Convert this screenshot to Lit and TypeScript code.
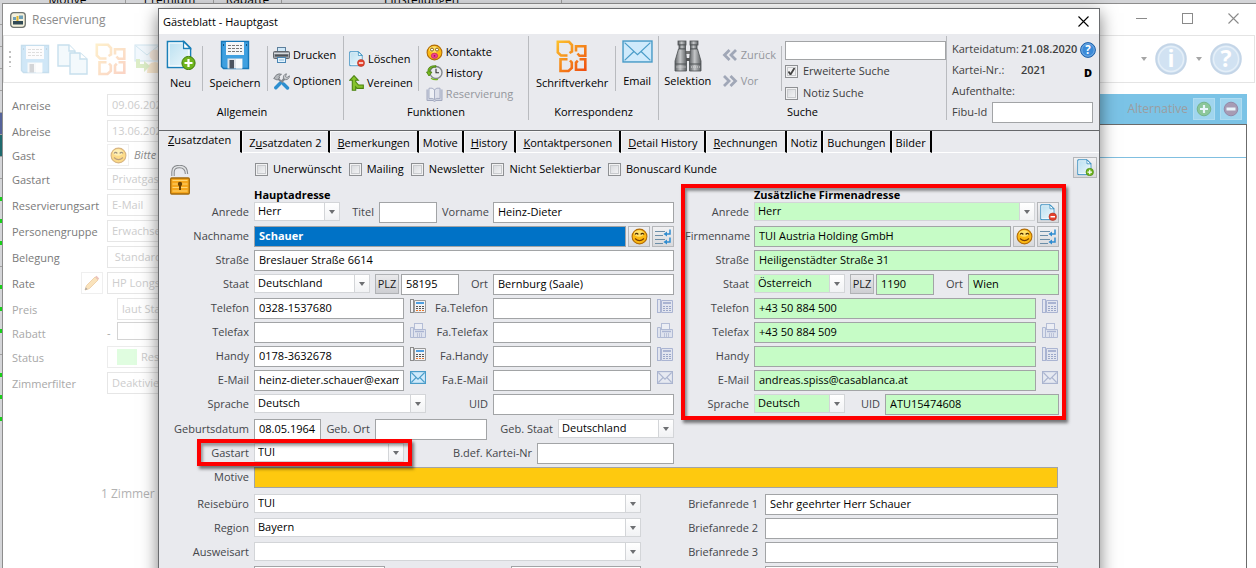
import { LitElement, html, css, nothing, TemplateResult } from "lit";
import { customElement } from "lit/decorators.js";
import { classMap } from "lit/directives/class-map.js";

/* ---------- icons ---------- */

const icoDoc = (w: number, badge: "plus" | "minus") => html`
  <svg width=${w} height=${w} viewBox="0 0 30 30" aria-hidden="true">
    <defs><linearGradient id="dg" x1="0" y1="0" x2="1" y2="1"><stop offset="0" stop-color="#b9dff0"/><stop offset="1" stop-color="#eef8fc"/></linearGradient></defs>
    <path d="M1.5 1.5H18L24.5 8V27.5H1.5Z" fill="url(#dg)" stroke="#1a7fb8" stroke-width="1.6"/>
    <path d="M3 3H17V9H23V26H3Z" fill="none" stroke="#fff" stroke-width="1.2"/>
    <path d="M17.5 1.5V8.5H24.5Z" fill="#fff" stroke="#1a7fb8" stroke-width="1.3"/>
    ${badge === "plus"
      ? html`<svg viewBox="0 0 30 30" width="30" height="30"><circle cx="22.5" cy="23" r="6.6" fill="#6fb51c" stroke="#3f7d0c"/><path d="M22.5 19V27M18.5 23H26.5" stroke="#fff" stroke-width="2.2"/></svg>`
      : html`<svg viewBox="0 0 30 30" width="30" height="30"><circle cx="22.5" cy="22.5" r="6.6" fill="#e5412c" stroke="#a82a18"/><path d="M18.5 22.5H26.5" stroke="#fff" stroke-width="2.6"/></svg>`}
  </svg>`;

const icoSave = () => html`
  <svg width="30" height="30" viewBox="0 0 30 30" aria-hidden="true">
    <path d="M1.5 1.5H28.5V28.5H3.5L1.5 26.5Z" fill="#3fa0e0" stroke="#1677b8" stroke-width="1.4"/>
    <rect x="6" y="2" width="18" height="13" fill="#f4f6f8"/>
    <path d="M8 5.5H22M8 8.5H22M8 11.5H22" stroke="#777" stroke-dasharray="3 1"/>
    <rect x="7.5" y="18.5" width="15" height="10" fill="#dfe3e8"/>
    <rect x="9.5" y="20" width="4.5" height="8.5" fill="#4c5560"/>
    <rect x="16" y="19" width="6" height="9.5" fill="#f7f9fa"/>
    <path d="M3.5 4V6M26.5 4V6" stroke="#14507c"/>
  </svg>`;

const icoPrinter = () => html`
  <svg width="17" height="16" viewBox="0 0 17 16" aria-hidden="true">
    <rect x="4.5" y=".5" width="8" height="5" fill="#cfe8f8" stroke="#5d7f9c"/>
    <rect x=".5" y="4.5" width="16" height="7" rx="1" fill="#9ba1a8" stroke="#62676d"/>
    <path d="M1 6.5H16" stroke="#d5d8dc"/><path d="M2 8.5H15" stroke="#4c5157" stroke-width="2"/>
    <rect x="4.5" y="10.5" width="8" height="5" fill="#e4f3fc" stroke="#4a86b4"/><path d="M6 13H11" stroke="#8ab9dc"/>
  </svg>`;

const icoTools = () => html`
  <svg width="17" height="17" viewBox="0 0 17 17" aria-hidden="true">
    <path d="M5 5.5L10 10.500" stroke="#85898f" stroke-width="2"/>
    <path d="M10.500 11L14.500 15" stroke="#2d8fd0" stroke-width="3.400" stroke-linecap="round"/>
    <path d="M7.500 10L12.500 4.500" stroke="#85898f" stroke-width="2.600"/>
    <path d="M2.800 14.800L7.200 10.300" stroke="#2d8fd0" stroke-width="3.400" stroke-linecap="round"/>
    <path d="M10.500 5.500A3.600 3.600 0 0 1 13.500.8L12.500 3.500L14 4.500L16.400 2.800A3.600 3.600 0 0 1 12.500 6.700Z" fill="#c6c9cd" stroke="#74787d" stroke-width=".8"/>
    <path d="M.7 5.500L3.500 1.800Q6 .2 8.500 1.300L6 3.200L6.600 5L4.200 7Z" fill="#b4b8bc" stroke="#6d7176" stroke-width=".8"/>
  </svg>`;

const icoMerge = () => html`
  <svg width="15" height="16" viewBox="0 0 15 16" aria-hidden="true">
    <path d="M5 .7L9.3 5.3H6.7V6.8L9.5 10H14.3V13.4H8L6.7 12V15.3H3.3V5.3H.7Z" fill="#86c32b" stroke="#4c8410" stroke-width="1.1"/>
  </svg>`;

const icoSmiley = (kiss = false) => html`
  <svg width="17" height="17" viewBox="0 0 17 17" aria-hidden="true">
    <circle cx="8.5" cy="8.5" r="7.4" fill="#fcb913" stroke="#b26d08" stroke-width="1.1"/>
    <ellipse cx="8" cy="5.5" rx="5" ry="3.3" fill="#ffe06a"/>
    ${kiss
      ? html`<svg width="17" height="17"><circle cx="6" cy="5.600" r="1.500" fill="#fff" stroke="#7a5200" stroke-width=".9"/><circle cx="11" cy="5.600" r="1.500" fill="#fff" stroke="#7a5200" stroke-width=".9"/><ellipse cx="8.5" cy="11.8" rx="3.2" ry="2.6" fill="#f2438f" stroke="#c5246a" stroke-width=".8"/><circle cx="8.5" cy="11.8" r=".9" fill="#a01050"/></svg>`
      : html`<svg width="17" height="17"><path d="M4 6.5Q5.6 4.4 7.3 6.5M9.7 6.5Q11.4 4.4 13 6.5" fill="none" stroke="#4a2b00" stroke-width="1.2"/><path d="M4 10.5Q8.5 14.8 13 10.5" fill="none" stroke="#7a3f00" stroke-width="1.1"/></svg>`}
  </svg>`;

const icoClock = () => html`
  <svg width="17" height="16" viewBox="0 0 17 16" aria-hidden="true">
    <circle cx="10" cy="7.5" r="6" fill="#e9ebee" stroke="#83878c" stroke-width="1.4"/>
    <path d="M10 3.8V7.8H13" fill="none" stroke="#333" stroke-width="1.1"/>
    <path d="M10 2.2Q3.6 1.5 3.7 7H6L3 11L.5 7H1.8Q1.6.2 10 .7Z" fill="#76b91f" stroke="#467e0d" stroke-width=".8"/>
    <path d="M5 13.2Q8 15.4 12 14.4" fill="none" stroke="#76b91f" stroke-width="1.2"/>
  </svg>`;

const icoBook = () => html`
  <svg width="17" height="15" viewBox="0 0 17 15" aria-hidden="true">
    <path d="M1 2.5V13.5H7L8.5 14.5L10 13.5H16V2.5" fill="#ccd1df" stroke="#a2a9bf"/>
    <path d="M3 1.2Q6.5.4 8.5 2.8V12.5Q6.5 10.8 3 11.5Z" fill="#eef0f5" stroke="#a8afc4"/>
    <path d="M14 1.2Q10.5.4 8.5 2.8V12.5Q10.5 10.8 14 11.5Z" fill="#dde0ea" stroke="#a8afc4"/>
  </svg>`;

const icoOffice = () => html`
  <svg width="32" height="33" viewBox="0 0 32 33" aria-hidden="true">
    <defs><linearGradient id="og" gradientUnits="userSpaceOnUse" x1="0" y1="0" x2="30" y2="32"><stop offset="0" stop-color="#fdc52e"/><stop offset=".5" stop-color="#f58a1c"/><stop offset="1" stop-color="#ef4a10"/></linearGradient></defs>
    <g fill="none" stroke="url(#og)" stroke-width="2.600">
      <path d="M11.500 15.500H5L1.800 12.500V1.800H13L16 5V11.500L13.500 13"/>
      <path d="M20 11.500V6.300H29.300V15.800H23.500L21.500 13.500"/>
      <path d="M11.500 19.300H4.500V31H12.500L15.800 28V22.500L14 20.500"/>
      <path d="M23.500 19.300H29.300V29.700H20V22.500L21.800 20.800"/>
    </g>
  </svg>`;

const icoMail = (w: number, h: number, dim = false) => {
  const c = dim ? "#aab4cf" : "#4a9cc8";
  return html`
  <svg width=${w} height=${h} viewBox="0 0 30 22" preserveAspectRatio="none" aria-hidden="true">
    <rect x="1" y="1" width="28" height="20" fill=${dim ? "#e6e9f1" : "#cfeafb"} stroke=${c} stroke-width=${w > 20 ? 1.4 : 2}/>
    <path d="M2.500 2.500L15 14L27.500 2.500M2.500 19.500L11.500 11M27.500 19.500L18.500 11" fill="none" stroke=${c} stroke-width=${w > 20 ? 1.2 : 1.9}/>
  </svg>`;
};

const icoBinoculars = () => html`
  <svg width="28" height="32" viewBox="0 0 28 32" aria-hidden="true">
    <defs><linearGradient id="bg"><stop offset="0" stop-color="#5e6164"/><stop offset=".45" stop-color="#c4c6c8"/><stop offset="1" stop-color="#5e6164"/></linearGradient></defs>
    <rect x="11" y="11" width="6" height="3" fill="#777"/><rect x="11" y="18" width="6" height="3" fill="#555"/>
    <g fill="url(#bg)" stroke="#4d5053" stroke-width=".8">
      <rect x="4" y="1" width="8" height="4"/><rect x="5" y="5" width="6.500" height="4"/>
      <path d="M4.500 9H11.500L12.500 20V31H1V21Z"/>
      <rect x="16" y="1" width="8" height="4"/><rect x="16.500" y="5" width="6.500" height="4"/>
      <path d="M16.500 9H23.500L27 21V31H15.500V20Z"/>
    </g>
    <path d="M1 24H12.500M15.500 24H27" stroke="#4d5053"/><path d="M2.500 27H11.500M17 27H26" stroke="#ddd" stroke-dasharray="1 1"/>
  </svg>`;

const icoChevrons = (left: boolean) => html`
  <svg width="16" height="12" viewBox="0 0 16 12" aria-hidden="true">
    <path d=${left ? "M7.500 1L2.500 6L7.500 11M14 1L9 6L14 11" : "M2 1L7 6L2 11M8.500 1L13.500 6L8.500 11"} fill="none" stroke="#a0a7b7" stroke-width="2.800"/>
  </svg>`;

const icoRound = (w: number, sign: string, fill: string, rim: string) => html`
  <svg width=${w} height=${w} viewBox="0 0 32 32" aria-hidden="true">
    <circle cx="16" cy="16" r="14.800" fill=${fill} stroke=${rim} stroke-width="2"/>
    <circle cx="16" cy="16" r="12.500" fill="none" stroke="#fff" stroke-opacity=".45" stroke-width="1.400"/>
    <text x="16" y="24" text-anchor="middle" font-family="Open Sans, sans-serif" font-weight="700" font-size="23" fill="#fff">${sign}</text>
  </svg>`;

const icoSign = (plus: boolean) => html`
  <svg width="16" height="16" viewBox="0 0 16 16" aria-hidden="true">
    <circle cx="8" cy="8" r="6.800" fill=${plus ? "#8cc79a" : "#a79bb4"} stroke=${plus ? "#75b58c" : "#9389a8"}/>
    <path d=${plus ? "M8 4V12M4 8H12" : "M3.500 8H12.500"} stroke="#e9f5fb" stroke-width=${plus ? 2.2 : 3}/>
  </svg>`;

const icoLock = () => html`
  <svg width="20" height="30" viewBox="0 0 20 30" aria-hidden="true">
    <path d="M3 11V7Q3 1.500 9.500 1.500Q16.500 1.500 16.500 9" fill="none" stroke="#85888b" stroke-width="3.400"/>
    <path d="M3 11V7Q3 1.500 9.500 1.500Q16.500 1.500 16.500 9" fill="none" stroke="#e2e4e6" stroke-width="1.400"/>
    <rect x=".7" y="13" width="18.600" height="16" rx="1" fill="#f5a61c" stroke="#a3690b" stroke-width="1.300"/>
    <path d="M2.500 15.500H17.500M2.500 19H17.500M2.500 22.500H17.500M2.500 26H17.500" stroke="#ffd571" stroke-width="1"/>
    <circle cx="10" cy="19" r="2.200" fill="#6b4204"/><path d="M10 19V25" stroke="#6b4204" stroke-width="2"/>
  </svg>`;

const icoLines = () => html`
  <svg width="18" height="16" viewBox="0 0 18 16" aria-hidden="true">
    <path d="M1 2.500H11M1 6.500H9M1 10.500H11M1 14.500H9" stroke="#6c8ea8" stroke-width="1.200"/>
    <path d="M16 .5V5H12M16 8.500V13H12" fill="none" stroke="#2f8cd0" stroke-width="1.500"/>
    <path d="M9.500 5L13 2.500V7.500ZM9.500 13L13 10.500V15.500Z" fill="#2f8cd0"/>
  </svg>`;

const icoPhone = (dim = false) => html`
  <svg width="16" height="15" viewBox="0 0 16 15" aria-hidden="true">
    <path d="M4.500 1.500H15.500V13.500H4.500Z" fill=${dim ? "#e2e5ef" : "#f1f2f4"} stroke=${dim ? "#aab4d2" : "#999"}/>
    <rect x=".5" y=".5" width="3" height="13" fill=${dim ? "#e2e5ef" : "#f1f2f4"} stroke=${dim ? "#aab4d2" : "#8c8c8c"}/>
    <path d="M6 4H14" stroke=${dim ? "#aab4d2" : "#4d9ee0"} stroke-width="2"/>
    <path d="M6 7.500H14M6 9.500H14" stroke=${dim ? "#9ba7c8" : "#555"} stroke-dasharray="2 1"/>
    <path d="M6 11.500H14" stroke=${dim ? "#9ba7c8" : "#e8762c"} stroke-dasharray="2 1"/>
  </svg>`;

const icoFax = () => html`
  <svg width="16" height="16" viewBox="0 0 16 16" aria-hidden="true">
    <rect x="4.500" y=".5" width="8" height="6" fill="#eceef4" stroke="#b4bdd6"/>
    <path d="M.5 4.500H3.500V14.500H.5ZM3.500 6.500H15.500V14.500H3.500Z" fill="#dfe3ee" stroke="#b0bad4"/>
    <path d="M5 8.500H14" stroke="#aab4d2" stroke-width="1.500"/>
    <path d="M7 11H13M7 13H13" stroke="#97a2c4" stroke-dasharray="1 1"/>
  </svg>`;

const icoClose = (w: number, c: string) => html`
  <svg width=${w} height=${w} viewBox="0 0 11 11" aria-hidden="true"><path d="M.5.5L10.500 10.500M10.500.5L.5 10.500" stroke=${c} stroke-width="1.100"/></svg>`;

/* ---------- shared rules ---------- */

const base = css`
  * { box-sizing: border-box; }
  :host { font: 11px/14px "Open Sans", "Noto Sans", sans-serif; color: #000; }
  button { font: inherit; color: inherit; padding: 0; margin: 0; border: 0; background: none; white-space: nowrap; }
  input, select { font: inherit; color: inherit; margin: 0; min-width: 0; border-radius: 0; outline: 0; }
  svg { display: block; flex: none; }
  label { white-space: nowrap; }
`;

/* ---------- window in the background ---------- */

interface ResRow { label: string; value: string; kind?: "face" | "pencil" | "inset" | "minus" | "status"; tall?: boolean; dim?: boolean; }

const RES_ROWS: ResRow[] = [
  { label: "Anreise", value: "09.06.2020", tall: true },
  { label: "Abreise", value: "13.06.2020" },
  { label: "Gast", value: "Bitte wählen", kind: "face" },
  { label: "Gastart", value: "Privatgast", tall: true },
  { label: "Reservierungsart", value: "E-Mail", tall: true },
  { label: "Personengruppe", value: "Erwachsene", tall: true },
  { label: "Belegung", value: " Standard", tall: true },
  { label: "Rate", value: "HP Longstay", kind: "pencil", tall: true },
  { label: "Preis", value: "laut Stamm", kind: "inset", dim: true },
  { label: "Rabatt", value: "", kind: "minus", dim: true },
  { label: "Status", value: "Reservierung", kind: "status", tall: true, dim: true },
  { label: "Zimmerfilter", value: "Deaktiviert", dim: true },
];

@customElement("reservation-window")
export class ReservationWindow extends LitElement {
  static styles = [base, css`
    :host { display: flex; flex-direction: column; flex: 1; background: #fff; border-left: 1px solid #8d8d8d; border-top: 1px solid #8d8d8d; }
    .title { display: flex; align-items: center; height: 31px; padding: 0 17px 0 7px; gap: 6px; color: #8c8c8c; font-size: 12px; }
    .caps { display: flex; align-items: center; gap: 35px; margin-left: auto; margin-top: -3px; }
    .bar { display: flex; align-items: center; height: 48px; margin-right: 1px; padding: 0 12px 0 5px; border: 1px solid #e4e4e4; }
    .grip { width: 2px; height: 16px; margin-right: 9px; background: repeating-linear-gradient(#c0c0c0 0 2px, transparent 2px 5px); }
    .faded { display: flex; align-items: center; gap: 7px; opacity: .24; }
    .round { display: flex; align-items: center; gap: 8px; margin-left: auto; }
    .half { opacity: .28; }
    .caret { width: 0; border: 3px solid transparent; border-top: 4px solid #a6a6a6; border-bottom: 0; margin-left: 1px; }
    .main { display: flex; flex: 1; padding-top: 11px; }
    .form { width: 240px; padding-left: 9px; }
    .line { display: flex; height: 24px; color: #7a7a7a; }
    .line.tall { height: 26px; }
    .line.dim { color: #a8a8a8; }
    .line > * { flex: none; }
    .line label { width: 69px; line-height: 23px; }
    .lead { display: flex; justify-content: flex-end; width: 26px; padding-right: 4px; }
    .sq { display: flex; align-items: center; justify-content: center; flex: none; width: 22px; height: 22px; border: 1px solid #e0e0e0; opacity: .5; }
    .box { width: 120px; height: 22px; padding: 0 4px 2px; border: 1px solid #e6e6e6; background: #fff; color: #cdcdcd; }
    .inset { margin-left: 10px; }
    .minus { width: 10px; line-height: 22px; }
    .low { height: 18px; border-color: #d4d4d4; }
    .bare { border: 0; margin-left: 4px; font-style: italic; color: #8d8d8d; padding-left: 1px; width: 90px; }
    .state { display: flex; width: 130px; height: 22px; border: 1px solid #ececec; padding: 2px 0 0 9px; }
    .green { flex: none; width: 20px; height: 16px; background: #e0fde0; }
    .state .box { border: 0; height: 16px; width: 90px; }
    .count { margin: 91px 0 0 89px; color: #b2b2b2; font-size: 12px; white-space: nowrap; }
    .pane { flex: 1; margin-right: 9px; display: flex; flex-direction: column; }
    .alt { display: flex; align-items: center; justify-content: flex-end; gap: 5px; height: 30px; padding-right: 5px; background: #7bc3e6; color: #9b9da0; font-size: 12px; }
    .alt button { display: flex; align-items: center; justify-content: center; width: 22px; height: 22px; background: #a0d5ee; border: 1px solid #b0dcf1; }
    .list { flex: 1; border: 1px solid #6b6b6b; border-bottom: 0; }
    .list div { height: 33px; border-bottom: 1px solid #80bfe0; }
  `];

  private row(r: ResRow, i: number) {
    const id = `res${i}`;
    const box = (cls: string) => html`<input id=${id} class="box ${cls}" .value=${r.value}>`;
    let body: TemplateResult = box("");
    if (r.kind === "face") body = html`<span class="sq">${icoSmiley()}</span>${box("bare")}`;
    if (r.kind === "inset") body = box("inset");
    if (r.kind === "minus") body = html`<span class="minus">-</span>${box("low")}`;
    if (r.kind === "status") body = html`<span class="state"><span class="green"></span>${box("")}</span>`;
    return html`
      <div class=${classMap({ line: true, tall: !!r.tall, dim: !!r.dim })}>
        <label for=${id}>${r.label}</label>
        <span class="lead">${r.kind === "pencil" ? html`<span class="sq"><svg width="16" height="16" viewBox="0 0 16 16"><path d="M1 15L2.500 10.500L11 2L14 5L5.500 13.500Z" fill="#f6c87c" stroke="#e0a860"/><path d="M11 2L12.500.8L15.200 3.500L14 5Z" fill="#d98a7a"/><path d="M1 15L1.800 12.500L3.500 14.200Z" fill="#444"/></svg></span>` : nothing}</span>
        ${body}
      </div>`;
  }

  render() {
    return html`
      <header class="title">
        <svg width="16" height="16" viewBox="0 0 16 16"><rect x=".7" y=".7" width="14.600" height="14.600" rx="3" fill="#f4f1dc" stroke="#6f7470" stroke-width="1.300"/><path d="M3 8V5H6V8M9 3.500H13V7H9Z" fill="#6fa0b8"/><path d="M3 9H13V12.500H3Z" fill="#314a55"/><path d="M6.500 4H8.500V9H6.500Z" fill="#e2b52c"/></svg>
        <span>Reservierung</span>
        <span class="caps">
          <svg width="11" height="11"><path d="M0 5.500H11" stroke="#8a8a8a"/></svg>
          <svg width="11" height="11"><rect x=".5" y=".5" width="10" height="10" fill="none" stroke="#8a8a8a"/></svg>
          ${icoClose(11, "#8a8a8a")}
        </span>
      </header>
      <div class="bar">
        <span class="grip"></span>
        <span class="faded">
          ${icoSave()}
          <svg width="31" height="31" viewBox="0 0 31 31"><g fill="#cfe9f5" stroke="#1a7fb8" stroke-width="1.400"><path d="M1 1H12L18 7V22H1Z"/><path d="M12 1V7H18" fill="#fff"/><path d="M13 9H23L30 15V30H13Z"/><path d="M23 9V15H30" fill="#fff"/></g></svg>
          ${icoOffice()}
          <svg width="30" height="30" viewBox="0 0 30 30"><rect x="1" y="1" width="24" height="16" fill="#cfeafb" stroke="#4a9cc8"/><path d="M2 2L13 11L24 2" fill="none" stroke="#4a9cc8"/><circle cx="21" cy="11" r="5.500" fill="#d3a06e"/><path d="M13 29Q13 18 21 18T30 29Z" fill="#e8a33c"/><path d="M2 15V24H10V28L16 22L10 17V20H6V15Z" fill="#76b91f"/></svg>
        </span>
        <span class="round">
          <span class="caret"></span>
          <span class="half">${icoRound(32, "i", "#5c9bd4", "#2e6dad")}</span>
          <span class="caret"></span>
          <span class="half">${icoRound(32, "?", "#5c9bd4", "#2e6dad")}</span>
        </span>
      </div>
      <div class="main">
        <div class="form">
          ${RES_ROWS.map((r, i) => this.row(r, i))}
          <div class="count">1 Zimmer benötigt</div>
        </div>
        <div class="pane">
          <div class="alt"><span>Alternative</span>
            <button aria-label="Alternative hinzufügen">${icoSign(true)}</button>
            <button aria-label="Alternative entfernen">${icoSign(false)}</button>
          </div>
          <div class="list"><div></div></div>
        </div>
      </div>`;
  }
}

/* ---------- guest sheet dialog ---------- */

const TABS: { key: string; rest: string; pre?: string; tight?: boolean }[] = [
  { key: "Z", rest: "usatzdaten" },
  { pre: "Z", key: "u", rest: "satzdaten 2" },
  { key: "B", rest: "emerkungen" },
  { key: "", rest: "Motive", tight: true },
  { key: "H", rest: "istory" },
  { key: "K", rest: "ontaktpersonen" },
  { key: "D", rest: "etail History" },
  { key: "R", rest: "echnungen" },
  { key: "", rest: "Notiz", tight: true },
  { key: "", rest: "Buchungen", tight: true },
  { key: "", rest: "Bilder", tight: true },
];

const FLAGS = ["Unerwünscht", "Mailing", "Newsletter", "Nicht Selektierbar", "Bonuscard Kunde"];

@customElement("guest-dialog")
export class GuestDialog extends LitElement {
  static styles = [base, css`
    :host { display: block; background: #e9eaee; border: 1px solid #6a6c6f; box-shadow: 0 5px 16px rgba(0, 0, 0, .5); }
    .title { display: flex; align-items: center; justify-content: space-between; height: 25px; padding: 0 10px 0 4px; background: #fff; }

    .ribbon { display: flex; height: 97px; padding-top: 2px; border-bottom: 1px solid #66686b; }
    .group { display: flex; flex-direction: column; flex: none; height: 84px; border-right: 1px solid #b9bbbf; }
    .tools { display: flex; height: 69px; }
    .caption { text-align: center; }
    .g1, .g2 { width: 185px; }
    .g1 .caption { padding-right: 18px; }
    .g3 { width: 130px; }
    .g4 { width: 288px; }
    .big { display: flex; flex-direction: column; align-items: center; justify-content: space-between; height: 50px; margin-top: 4px; }
    .big.mail, .big.sel { height: 48px; }
    .big.neu { width: 43px; } .big.save { width: 64px; } .big.letter { width: 87px; } .big.mail { width: 42px; } .big.sel { width: 59px; }
    .sep { width: 1px; height: 45px; margin-top: 10px; background: #b9bbbf; }
    .stack { display: flex; flex-direction: column; padding: 11px 0 0 5px; gap: 10px; }
    .stack.low { padding-top: 15px; gap: 8px; }
    .stack.three { padding: 8px 0 0 7px; gap: 5px; }
    .stack button { display: flex; align-items: center; gap: 3px; height: 16px; }
    .stack .off { color: #94979d; }
    .push { margin-left: 5px; }
    .search { display: flex; flex-direction: column; gap: 8px; padding: 5px 0 0 3px; }
    .search .box { width: 161px; height: 19px; margin-bottom: -4px; }
    .search .check { color: #3c3c3c; }
    .info { display: grid; grid-template-columns: 69px 56px 1fr; grid-template-rows: 21px 21px 21px 21px; flex: 1; padding: 3px 0 0 5px; line-height: 20px; color: #3f3f3f; }
    .info b { font-weight: 600; }
    .info .help { margin-top: 3px; justify-self: end; padding-right: 3px; }
    .info .d { justify-self: end; padding-right: 7px; color: #000; font-weight: 800; line-height: 26px; }
    .info .wide { grid-column: span 3; }
    .fibu { grid-column: span 3; display: flex; gap: 5px; padding-right: 6px; }
    .fibu .box { flex: 1; }

    .check { display: flex; align-items: center; gap: 5px; height: 14px; }
    .check input { appearance: none; flex: none; width: 13px; height: 13px; border: 1px solid #8e9093; background: linear-gradient(135deg, #d4d6da, #f8f8f9); box-shadow: inset 0 0 0 1px #f2f2f3, inset 0 0 0 2px #c8cacd; }
    .check input:checked { background: #f2f2f3 url("data:image/svg+xml,%3Csvg xmlns='http://www.w3.org/2000/svg' viewBox='0 0 11 11'%3E%3Cpath d='M2.500 5.500L4.500 8.500L8.500 2' fill='none' stroke='%23444' stroke-width='1.800'/%3E%3C/svg%3E") center / 11px no-repeat; }

    .tabs { display: flex; height: 22px; }
    .tab { height: 22px; padding: 2px 7px 0; border-right: 2px solid #000; border-bottom: 1px solid #fff; box-shadow: inset 1px 1px #f8f8f9; }
    .tab.tight { padding: 2px 4px 0; }
    .tab.on { padding: 0 9px 3px; border-bottom-color: transparent; box-shadow: none; }
    .rest { flex: 1; border-bottom: 1px solid #fff; }

    .top { display: flex; align-items: flex-start; height: 31px; padding: 4px 2px 0 11px; }
    .lock { margin: 8px 65px -12px 0; }
    .flags { display: flex; gap: 7px; padding-top: 5px; }
    .sq { display: flex; align-items: center; justify-content: center; flex: none; width: 22px; height: 21px; border: 1px solid #b5b7ba; background: linear-gradient(#f1f1f3, #d8d9dc); }
    .sq.wide { width: 24px; margin-left: auto; }

    .sheets { display: flex; align-items: flex-start; padding-right: 33px; gap: 7px; }
    .left { display: flex; flex-direction: column; flex: 1; min-width: 0; gap: 3px; padding-top: 4px; }
    .firm { display: flex; flex-direction: column; flex: none; gap: 3px; width: 385px; padding: 0 3px 1px 0; border: 4px solid #fe0000; box-shadow: 2px 3px 3px rgba(0, 0, 0, .5), inset 2px 3px 3px rgba(0, 0, 0, .4); }
    h2 { margin: 0 0 -3px; font-size: 11px; line-height: 14px; font-weight: 700; padding-left: 95px; }
    .firm h2 { padding-left: 69px; }
    .row { display: flex; gap: 5px; height: 21px; }
    .row.rel { position: relative; }
    .row label { flex: none; text-align: right; line-height: 20px; color: #44464a; }
    .left .row > label:first-child, .more label.a, .motive label { width: 90px; }
    .firm .row > label:first-child { width: 64px; }
    .late { margin-top: 1px; }
    .join { display: flex; flex: 1; gap: 2px; min-width: 0; }
    .join.fix { flex: none; }
    .icon { flex: none; width: 18px; padding: 1px 0 0 1px; }
    .plz { width: 24px; height: 20px; border: 1px solid #b0b2b5; background: linear-gradient(#eaeaec, #cdced2); color: #222; }
    .box { height: 21px; padding: 0 4px 2px; border: 1px solid #a2a4a6; background: #fff; }
    .combo { display: grid; height: 19px; min-width: 0; }
    .combo select { grid-area: 1 / 1; width: 100%; height: 19px; appearance: none; padding: 0 17px 1px 3px; border: 1px solid #d3d5d8; background: #fff; }
    .combo .arrow { grid-area: 1 / 1; justify-self: end; display: flex; align-items: center; justify-content: center; width: 15px; height: 17px; margin: 1px; border-left: 1px solid #d3d5d8; background: linear-gradient(#fff, #f1f2f4); pointer-events: none; }
    .combo .arrow::after { content: ""; border: 3px solid transparent; border-top: 4px solid #6d6f72; border-bottom: 0; }
    .firm .box, .firm select { background: #c6fcc6; }
    .name { background: #0072c6; color: #fff; font-weight: 700; }
    .grow { flex: 1; }
    .w58 { width: 58px; } .w67 { width: 67px; } .w112 { width: 112px; } .w150 { width: 150px; }
    .c86 { width: 86px; } .c91 { width: 91px; } .c116 { width: 116px; } .c150 { width: 150px; } .c172 { width: 172px; }
    .l24 { width: 24px; } .l29 { width: 29px; } .l46 { width: 46px; } .l30 { width: 30px; } .l56 { width: 56px; } .l57 { width: 57px; } .l44 { width: 44px; } .l61 { width: 61px; } .l123 { width: 123px; }
    .mark { position: absolute; left: 38px; top: -4px; width: 215px; height: 27px; border: 4px solid #fe0000; box-shadow: 2px 3px 3px rgba(0, 0, 0, .5), inset 2px 3px 3px rgba(0, 0, 0, .35); pointer-events: none; }
    .motive { margin: 3px 41px 6px 0; }
    .motive .box { background: #fec90f; }
    .more { display: flex; padding-right: 41px; }
    .more .colA { display: flex; flex-direction: column; flex: 1; min-width: 0; gap: 3px; }
    .more .colB { display: flex; flex-direction: column; flex: none; width: 417px; gap: 3px; }
    .colB label { width: 117px; margin-right: 2px; }
    .gapless { padding-left: 95px; gap: 126px; }
  `];

  private combo(id: string, value: string, cls: string) {
    return html`<span class="combo ${cls}"><select id=${id}><option>${value}</option></select><span class="arrow"></span></span>`;
  }
  private box(id: string, value: string, cls: string) {
    return html`<input id=${id} class="box ${cls}" .value=${value}>`;
  }
  private contact(n: number, label: string, value: string, icon: TemplateResult, dimIcon: TemplateResult) {
    return html`<div class="row">
      <label for="k${n}">${label}</label>${this.box(`k${n}`, value, "w150")}<span class="icon">${icon}</span>
      <label class="l56" for="fk${n}">Fa.${label}</label>${this.box(`fk${n}`, "", "grow")}<span class="icon">${dimIcon}</span>
    </div>`;
  }
  private firmContact(n: number, label: string, value: string, icon: TemplateResult) {
    return html`<div class="row"><label for="c${n}">${label}</label>${this.box(`c${n}`, value, "grow")}<span class="icon">${icon}</span></div>`;
  }

  private ribbon() {
    return html`
      <div class="ribbon">
        <div class="group g1">
          <div class="tools">
            <button class="big neu">${icoDoc(30, "plus")}<span>Neu</span></button><span class="sep"></span>
            <button class="big save">${icoSave()}<span>Speichern</span></button><span class="sep"></span>
            <div class="stack"><button>${icoPrinter()}Drucken</button><button>${icoTools()}Optionen</button></div>
          </div>
          <div class="caption">Allgemein</div>
        </div>
        <div class="group g2">
          <div class="tools">
            <div class="stack low"><button>${icoDoc(16, "minus")}Löschen</button><button>${icoMerge()}Vereinen</button></div>
            <span class="sep push"></span>
            <div class="stack three"><button>${icoSmiley(true)}Kontakte</button><button>${icoClock()}History</button><button class="off" disabled>${icoBook()}Reservierung</button></div>
          </div>
          <div class="caption">Funktionen</div>
        </div>
        <div class="group g3">
          <div class="tools">
            <button class="big letter">${icoOffice()}<span>Schriftverkehr</span></button><span class="sep"></span>
            <button class="big mail">${icoMail(31, 23)}<span>Email</span></button>
          </div>
          <div class="caption">Korrespondenz</div>
        </div>
        <div class="group g4">
          <div class="tools">
            <button class="big sel">${icoBinoculars()}<span>Selektion</span></button>
            <div class="stack"><button class="off" disabled>${icoChevrons(true)}Zurück</button><button class="off" disabled>${icoChevrons(false)}Vor</button></div>
            <span class="sep push"></span>
            <div class="search">
              <input class="box" aria-label="Suche">
              <label class="check"><input type="checkbox" checked>Erweiterte Suche</label>
              <label class="check"><input type="checkbox">Notiz Suche</label>
            </div>
          </div>
          <div class="caption">Suche</div>
        </div>
        <div class="info">
          <span>Karteidatum:</span><b>21.08.2020</b><span class="help">${icoRound(16, "?", "#3b8ad8", "#1d5fa8")}</span>
          <span>Kartei-Nr.:</span><b>2021</b><span class="d">D</span>
          <span class="wide">Aufenthalte:</span>
          <div class="fibu"><label for="fibu">Fibu-Id</label><input id="fibu" class="box"></div>
        </div>
      </div>`;
  }

  render() {
    return html`
      <header class="title"><span>Gästeblatt - Hauptgast</span><button aria-label="Schließen">${icoClose(11, "#000")}</button></header>
      ${this.ribbon()}
      <nav class="tabs">
        ${TABS.map((t, i) => html`<button class=${classMap({ tab: true, on: i === 0, tight: !!t.tight })}>${t.pre ?? ""}${t.key ? html`<u>${t.key}</u>` : nothing}${t.rest}</button>`)}
        <span class="rest"></span>
      </nav>

      <div class="top">
        <span class="lock">${icoLock()}</span>
        <div class="flags">${FLAGS.map((f) => html`<label class="check"><input type="checkbox">${f}</label>`)}</div>
        <button class="sq wide" aria-label="Adresse hinzufügen">${icoDoc(17, "plus")}</button>
      </div>

      <div class="sheets">
        <section class="left">
          <h2>Hauptadresse</h2>
          <div class="row">
            <label for="anrede">Anrede</label>${this.combo("anrede", "Herr", "c86")}
            <label class="l29" for="titel">Titel</label>${this.box("titel", "", "w58")}
            <label class="l46" for="vorname">Vorname</label>${this.box("vorname", "Heinz-Dieter", "grow")}
          </div>
          <div class="row"><label for="nachname">Nachname</label>
            <span class="join">${this.box("nachname", "Schauer", "grow name")}
              <button class="sq" aria-label="Gast wählen">${icoSmiley()}</button><button class="sq" aria-label="Zeilen umbrechen">${icoLines()}</button></span>
          </div>
          <div class="row"><label for="strasse">Straße</label>${this.box("strasse", "Breslauer Straße 6614", "grow")}</div>
          <div class="row">
            <label for="staat">Staat</label>${this.combo("staat", "Deutschland", "c116")}
            <span class="join fix"><button class="plz">PLZ</button><input class="box w58" aria-label="PLZ" .value=${"58195"}></span>
            <label class="l24" for="ort">Ort</label>${this.box("ort", "Bernburg (Saale)", "grow")}
          </div>
          ${this.contact(1, "Telefon", "0328-1537680", icoPhone(), icoPhone(true))}
          ${this.contact(2, "Telefax", "", icoFax(), icoFax())}
          ${this.contact(3, "Handy", "0178-3632678", icoPhone(), icoPhone(true))}
          ${this.contact(4, "E-Mail", "heinz-dieter.schauer@example.com", icoMail(16, 13), icoMail(16, 13, true))}
          <div class="row">
            <label for="sprache">Sprache</label>${this.combo("sprache", "Deutsch", "c172")}
            <label class="l57" for="uid">UID</label>${this.box("uid", "", "grow")}
          </div>
          <div class="row late">
            <label for="geb">Geburtsdatum</label>${this.box("geb", "08.05.1964", "w67")}
            <label class="l44" for="gebort">Geb. Ort</label>${this.box("gebort", "", "w112")}
            <label class="l61" for="gebstaat">Geb. Staat</label>${this.combo("gebstaat", "Deutschland", "grow")}
          </div>
          <div class="row rel">
            <label for="gastart">Gastart</label>${this.combo("gastart", "TUI", "c150")}
            <label class="l123" for="kartei">B.def. Kartei-Nr</label>${this.box("kartei", "", "grow")}
            <span class="mark"></span>
          </div>
        </section>

        <section class="firm">
          <h2>Zusätzliche Firmenadresse</h2>
          <div class="row"><label for="fanrede">Anrede</label>
            <span class="join">${this.combo("fanrede", "Herr", "grow")}<button class="sq" aria-label="Firmenadresse löschen">${icoDoc(17, "minus")}</button></span></div>
          <div class="row"><label for="firma">Firmenname</label>
            <span class="join">${this.box("firma", "TUI Austria Holding GmbH", "grow")}
              <button class="sq" aria-label="Firma wählen">${icoSmiley()}</button><button class="sq" aria-label="Zeilen umbrechen">${icoLines()}</button></span></div>
          <div class="row"><label for="fstr">Straße</label>${this.box("fstr", "Heiligenstädter Straße 31", "grow")}</div>
          <div class="row">
            <label for="fstaat">Staat</label>${this.combo("fstaat", "Österreich", "c91")}
            <span class="join fix"><button class="plz">PLZ</button><input class="box w58" aria-label="PLZ" .value=${"1190"}></span>
            <label class="l24" for="fort">Ort</label>${this.box("fort", "Wien", "grow")}
          </div>
          ${this.firmContact(1, "Telefon", "+43 50 884 500", icoPhone(true))}
          ${this.firmContact(2, "Telefax", "+43 50 884 509", icoFax())}
          ${this.firmContact(3, "Handy", "", icoPhone(true))}
          ${this.firmContact(4, "E-Mail", "andreas.spiss@casablanca.at", icoMail(16, 13, true))}
          <div class="row">
            <label for="fspr">Sprache</label>${this.combo("fspr", "Deutsch", "c91")}
            <label class="l30" for="fuid">UID</label>${this.box("fuid", "ATU15474608", "grow")}
          </div>
        </section>
      </div>

      <div class="row motive"><label for="motive">Motive</label>${this.box("motive", "", "grow")}</div>

      <div class="more">
        <div class="colA">
          <div class="row"><label class="a" for="buero">Reisebüro</label>${this.combo("buero", "TUI", "grow")}</div>
          <div class="row"><label class="a" for="region">Region</label>${this.combo("region", "Bayern", "grow")}</div>
          <div class="row"><label class="a" for="ausweis">Ausweisart</label>${this.combo("ausweis", "", "grow")}</div>
          <div class="row gapless"><input class="box grow" aria-label="Ausweisnummer"><input class="box grow" aria-label="Ausstellungsort"></div>
        </div>
        <div class="colB">
          ${["Sehr geehrter Herr Schauer", "", ""].map((v, i) => html`<div class="row"><label for="brief${i}">Briefanrede ${i + 1}</label>${this.box(`brief${i}`, v, "grow")}</div>`)}
          <div class="row"><label></label><input class="box grow" aria-label="Zusatz"></div>
        </div>
      </div>`;
  }
}

/* ---------- page ---------- */

const STRIP: string[] = ["", "", "", "", "", "blue", "teal", "", "on", "on", "on", "", "on", "on", "on", "", "on", "on", "on"];

@customElement("app-root")
export class AppRoot extends LitElement {
  static styles = [base, css`
    :host { display: flex; flex-direction: column; position: relative; height: 100vh; overflow: hidden; background: #d4d5d8; }
    .heads { display: flex; height: 3px; padding-left: 10px; }
    .heads span { display: flex; align-items: flex-end; justify-content: center; flex: none; width: 116px; height: 3px; overflow: hidden; border-right: 1px solid #9a9a9a; font-size: 12px; line-height: 6px; }
    .heads .short { width: 88px; }
    .heads .mid { width: 68px; }
    .heads .long { width: 280px; }
    .behind { display: flex; flex: 1; min-height: 0; }
    .strip { display: flex; flex-direction: column; flex: none; width: 2px; }
    .strip span { flex: none; height: 22px; border-bottom: 1px solid #a0a0a0; }
    .strip .on { border-bottom: 4px solid #19cf19; }
    .strip .blue { background: #55639a; }
    .strip .teal { background: #1f6a6e; }
    guest-dialog { position: absolute; top: 8px; left: 158px; right: 156px; }
  `];
  render() {
    return html`
      <div class="heads"><span>Motive</span><span class="short">Premium</span><span class="mid">Rabatte</span><span class="long">Einstellungen</span></div>
      <div class="behind">
        <div class="strip">${STRIP.map((c) => html`<span class=${c}></span>`)}</div>
        <reservation-window></reservation-window>
      </div>
      <guest-dialog></guest-dialog>`;
  }
}
